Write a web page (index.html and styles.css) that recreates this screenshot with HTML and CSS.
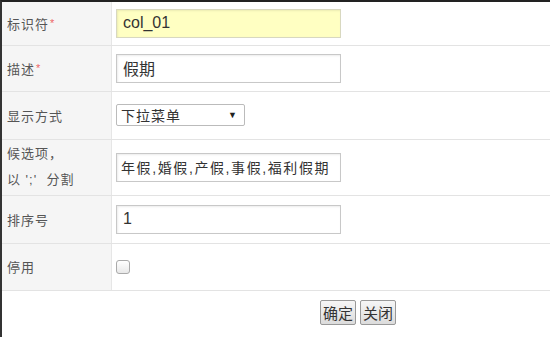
FILE: index.html
```html
<!DOCTYPE html>
<html lang="zh-CN">
<head>
    <meta charset="UTF-8">
    <title>编辑字段</title>
    <link rel="stylesheet" href="styles.css">
</head>
<body>
    <div class="frame">
        <table class="form">
            <tr class="r1">
                <th>标识符<span class="req">*</span></th>
                <td><input type="text" class="txt hl" value="col_01"></td>
            </tr>
            <tr class="r2">
                <th>描述<span class="req">*</span></th>
                <td><input type="text" class="txt" value="假期"></td>
            </tr>
            <tr class="r3">
                <th>显示方式</th>
                <td>
                    <div class="sel">
                        <span>下拉菜单</span>
                        <span class="arrow">&#9660;</span>
                    </div>
                </td>
            </tr>
            <tr class="r4">
                <th class="two">候选项，<br>以&nbsp;';'&nbsp;&nbsp;分割</th>
                <td><input type="text" class="txt small" value="年假,婚假,产假,事假,福利假期"></td>
            </tr>
            <tr class="r5">
                <th>排序号</th>
                <td><input type="text" class="txt" value="1"></td>
            </tr>
            <tr class="r6">
                <th>停用</th>
                <td><span class="chk"></span></td>
            </tr>
            <tr class="btns">
                <td colspan="2">
                    <button>确定</button><button>关闭</button>
                </td>
            </tr>
        </table>
    </div>
</body>
</html>
```

FILE: styles.css
```css
body {
    margin: 0;
    background: #fff;
    font-family: "Liberation Sans", "Noto Sans CJK SC", sans-serif;
}
.frame {
    width: 550px;
    height: 337px;
    box-sizing: border-box;
    border-top: 2px solid #222;
    border-left: 2px solid #333;
    overflow: hidden;
}
.form {
    width: 100%;
    border-collapse: collapse;
}
.form th,
.form td {
    border-bottom: 1px solid #e3e3e3;
    padding: 0;
}
.form th {
    width: 104px;
    background: #f5f5f5;
    border-right: 1px solid #e6e6e6;
    text-align: left;
    font-weight: normal;
    font-size: 13px;
    letter-spacing: 1px;
    color: #555;
    padding-left: 5px;
}
.form td {
    padding-left: 4px;
}
.req {
    color: #e66;
    margin-left: 1px;
    font-size: 11px;
    vertical-align: 2px;
}
.r1 { height: 43px; }
.r2 { height: 46px; }
.r3 { height: 48px; }
.r4 { height: 56px; }
.r5 { height: 48px; }
.r6 { height: 47px; }
.two {
    line-height: 26px;
}
.txt {
    display: block;
    width: 225px;
    height: 29px;
    box-sizing: border-box;
    border: 1px solid #c8c8c8;
    box-shadow: inset 1px 1px 2px rgba(0,0,0,0.08);
    padding: 0 6px;
    font-family: inherit;
    font-size: 16px;
    color: #333;
    background: #fff;
}
.txt.hl {
    background: #ffffc2;
    border-color: #d8d8c0;
}
.txt.small {
    font-size: 14px;
    letter-spacing: 1.6px;
    padding: 0 4px;
}
.sel {
    width: 129px;
    height: 22px;
    box-sizing: border-box;
    border: 1px solid #bbb;
    border-radius: 2px;
    display: flex;
    align-items: center;
    justify-content: space-between;
    padding: 0 6px 0 4px;
    font-size: 14px;
    letter-spacing: 1px;
    color: #333;
}
.arrow {
    font-size: 9px;
    color: #222;
}
.chk {
    display: block;
    width: 12px;
    height: 12px;
    border: 1px solid #aaa;
    border-radius: 3px;
    background: linear-gradient(#fff, #e8e8e8);
}
.btns td {
    height: 43px;
    text-align: center;
    padding-left: 164px;
    padding-bottom: 5px;
}
.btns button {
    font-family: inherit;
    font-size: 15px;
    color: #333;
    padding: 1px 2px;
    margin: 0 2px;
    border: 1px solid #999;
    border-radius: 2px;
    background: linear-gradient(#f6f6f6, #dcdcdc);
}
```
